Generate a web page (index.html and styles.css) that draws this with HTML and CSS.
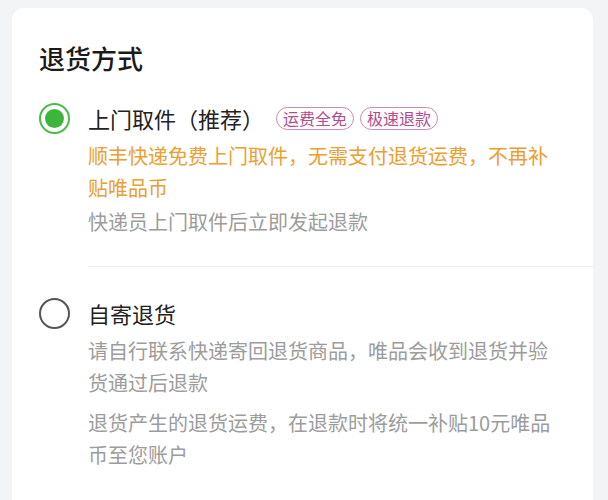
FILE: index.html
```html
<!doctype html>
<html lang="zh-CN">
<head>
	<meta charset="UTF-8">
	<title>退货方式</title>
	<link rel="stylesheet" href="styles.css">
</head>
<body>
	<div class="card">
		<h2 class="title">退货方式</h2>
		<div class="option">
			<span class="radio checked"></span>
			<div class="option-body">
				<div class="label">上门取件（推荐）<span class="tag">运费全免</span><span class="tag">极速退款</span></div>
				<p class="note orange">顺丰快递免费上门取件，无需支付退货运费，不再补贴唯品币</p>
				<p class="note">快递员上门取件后立即发起退款</p>
			</div>
		</div>
		<div class="divider"></div>
		<div class="option">
			<span class="radio"></span>
			<div class="option-body">
				<div class="label">自寄退货</div>
				<p class="note">请自行联系快递寄回退货商品，唯品会收到退货并验货通过后退款</p>
				<p class="note gap">退货产生的退货运费，在退款时将统一补贴10元唯品币至您账户</p>
			</div>
		</div>
	</div>
</body>
</html>
```

FILE: styles.css
```css
body{ margin: 0; background: #f3f4f6; font-family: "Noto Sans CJK SC", "Noto Sans", sans-serif; color: #222;}
.card{ margin: 8px 15px 0 12px; background: #fff; border-radius: 12px 12px 0 0; padding: 32px 0 40px 27px; min-height: 420px;}
.title{ margin: 0 0 26px; font-size: 26px; font-weight: 500; line-height: 36px; color: #1a1a1a;}
.option{ display: flex; align-items: flex-start;}
.radio{ flex: none; width: 31px; height: 31px; box-sizing: border-box; border: 2.5px solid #555; border-radius: 50%; margin: 1px 18px 0 0; position: relative;}
.radio.checked{ border-color: #4cbb48; background: #fff;}
.radio.checked::after{ content: ""; position: absolute; left: 3.5px; top: 3.5px; width: 19px; height: 19px; border-radius: 50%; background: #3cb53a;}
.option-body{ flex: 1; padding-right: 36px;}
.label{ font-size: 22px; line-height: 32px; display: flex; align-items: center;}
.tag{ display: inline-block; height: 23px; line-height: 20px; box-sizing: border-box; border: 1.5px solid #c98ab4; border-radius: 12px; padding: 0 6px; font-size: 16px; color: #b24c8f; margin-left: 6px;}
.label .tag:first-child{ margin-left: 12px;}
.note{ margin: 6px 0 0; font-size: 20px; line-height: 32px; color: #9c9c9c;}
.note + .note{ margin-top: 2px;}
.note.gap{ margin-top: 8px;}
.orange{ color: #e9a030;}
.divider{ height: 1px; background: #ececec; margin: 28px 0 30px 49px;}
```
